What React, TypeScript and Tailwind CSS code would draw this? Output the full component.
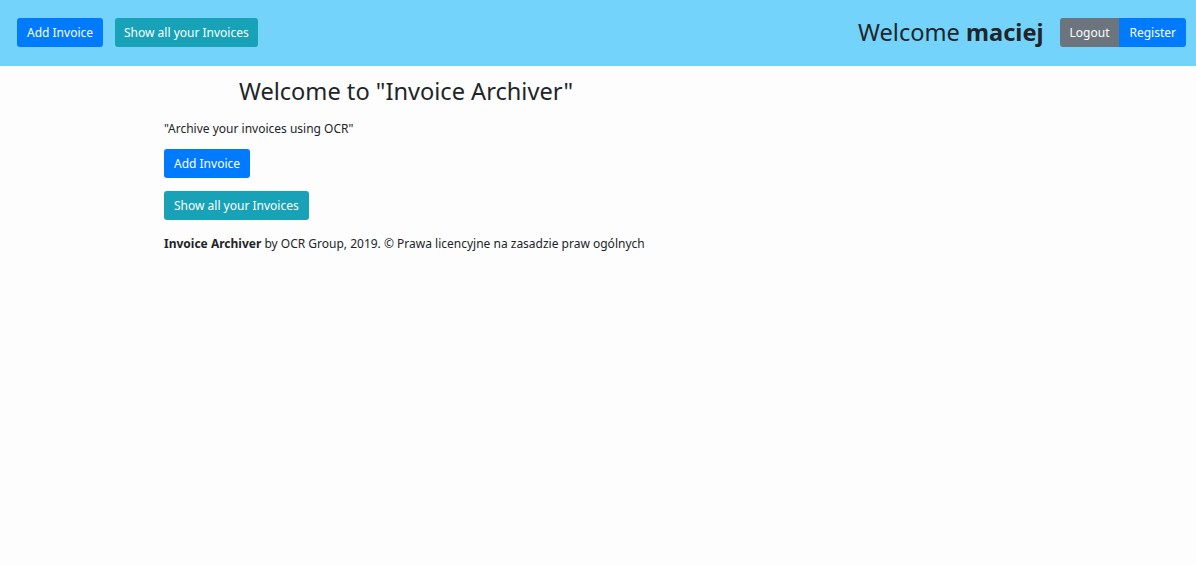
import React from "react";

export default function App() {
  return (
    <div className="min-h-[565px] bg-[#fdfdfd] text-[#212529]" style={{ fontFamily: '"Noto Sans", "Open Sans", sans-serif' }}>
      <nav className="h-[66px] bg-[#73d3fa] flex items-start pt-[18px] pl-[17px] pr-[10px]">
        <div className="flex items-center gap-[12px]">
          <button className="h-[29px] px-[10px] rounded-[3px] bg-[#007bff] text-white text-[12px]">Add Invoice</button>
          <button className="h-[29px] px-[9px] rounded-[3px] bg-[#17a2b8] text-white text-[12px]">Show all your Invoices</button>
        </div>
        <div className="ml-auto flex items-center">
          <span className="text-[23.6px] leading-[29px] mr-[16px]">Welcome <b>maciej</b></span>
          <button className="h-[29px] px-[10px] rounded-l-[3px] bg-[#6c757d] text-white text-[12px]">Logout</button>
          <button className="h-[29px] px-[10px] rounded-r-[3px] bg-[#007bff] text-white text-[12px]">Register</button>
        </div>
      </nav>
      <main className="ml-[164px] w-[484px] pt-[8px]">
        <h1 className="text-[23.6px] text-center leading-[34px]">Welcome to "Invoice Archiver"</h1>
        <p className="text-[12px] mt-[12px]">"Archive your invoices using OCR"</p>
        <div className="mt-[11px] flex flex-col items-start gap-[13px]">
          <button className="h-[29px] px-[10px] rounded-[3px] bg-[#007bff] text-white text-[12px]">Add Invoice</button>
          <button className="h-[29px] px-[10px] rounded-[3px] bg-[#17a2b8] text-white text-[12px]">Show all your Invoices</button>
        </div>
        <p className="text-[12px] mt-[15px] whitespace-nowrap"><b>Invoice Archiver</b> by OCR Group, 2019. © Prawa licencyjne na zasadzie praw ogólnych</p>
      </main>
    </div>
  );
}
